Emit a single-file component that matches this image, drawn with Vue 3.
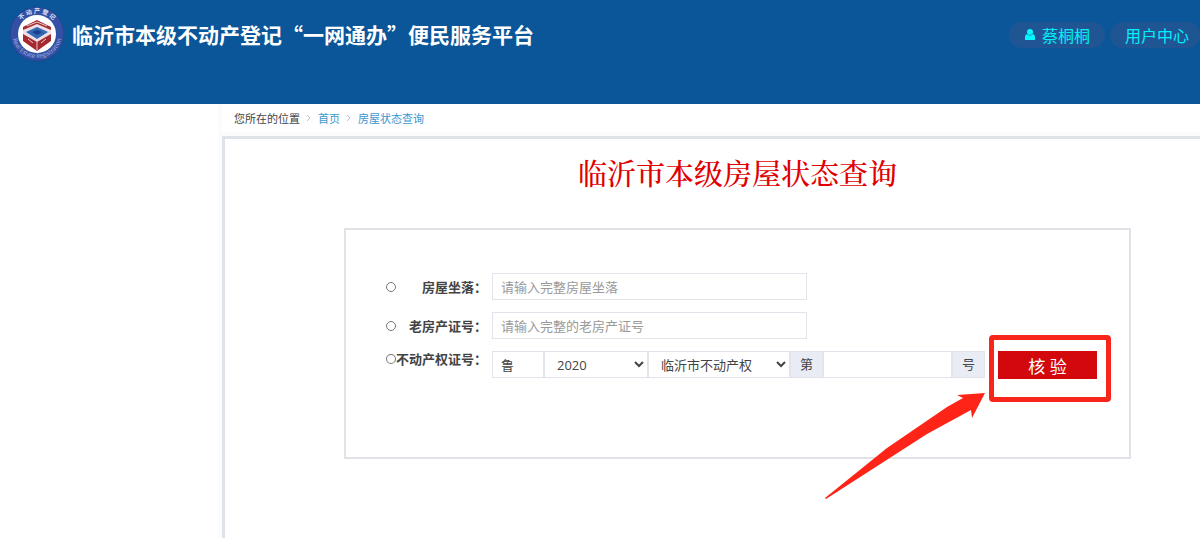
<template>
  <div class="page">
    <header class="header">
      <div class="brand">
        <svg class="logo" viewBox="0 0 56 56" role="img" aria-label="不动产登记">
          <defs>
            <path id="logo-top" d="M7 28a21 21 0 0 1 42 0" />
            <path id="logo-bottom" d="M3 27a25 25 0 0 0 50 0" />
          </defs>
          <circle cx="28" cy="28" r="27" fill="#3450a4" stroke="#1d478d" />
          <circle cx="28" cy="28" r="19" fill="#fff" />
          <text class="logo-cn"><textPath href="#logo-top" startOffset="50%" text-anchor="middle">不 动 产 登 记</textPath></text>
          <text class="logo-en"><textPath href="#logo-bottom" startOffset="50%" text-anchor="middle">Real Estate Registration</textPath></text>
          <path d="M28 14l14 7v14l-14 10-14-10V21z" fill="#a52a2f" />
          <path d="M14 24l14-6 14 6v4l-14 8-14-8z" fill="#eedfe6" />
          <path d="M17 26l11-5 11 5-11 7z" fill="#3267b1" />
          <path d="M23 26l5-2 5 2-5 3z" fill="#1c3f90" />
          <path d="M18 20l10-4 10 4M28 36v8M19 33l5 4M37 33l-5 4" fill="none" stroke="#e8c8cc" />
        </svg>
        <h1 class="site-title">临沂市本级不动产登记“一网通办”便民服务平台</h1>
      </div>
      <nav class="user-nav">
        <a href="#" class="pill">
          <svg class="user-icon" viewBox="0 0 12 12" aria-hidden="true">
            <circle cx="6" cy="3" r="3" />
            <path d="M3 5q3 3 6 0c2 1 2 2 2 4v2H1V9c0-2 0-3 2-4z" />
          </svg>
          蔡桐桐
        </a>
        <a href="#" class="pill">用户中心</a>
      </nav>
    </header>

    <main class="main">
      <nav class="breadcrumb">
        <span>您所在的位置</span>
        <svg class="sep" viewBox="0 0 4 8" aria-hidden="true"><path d="M0 1l3 3-3 3" /></svg>
        <a href="#">首页</a>
        <svg class="sep" viewBox="0 0 4 8" aria-hidden="true"><path d="M0 1l3 3-3 3" /></svg>
        <a href="#">房屋状态查询</a>
      </nav>

      <section class="panel">
        <h2 class="panel-title">临沂市本级房屋状态查询</h2>

        <form class="query-form" @submit.prevent>
          <div v-for="item in textRows" :key="item.key" class="row">
            <label class="row-label">
              <input v-model="queryType" type="radio" name="queryType" :value="item.key" />
              <span>{{ item.label }}：</span>
            </label>
            <input
              v-model="form[item.key]"
              type="text"
              class="field field-long"
              :aria-label="item.label"
              :placeholder="item.placeholder"
            />
          </div>

          <div class="row row-cert">
            <label class="row-label">
              <input v-model="queryType" type="radio" name="queryType" value="certificate" />
              <span>不动产权证号：</span>
            </label>
            <div class="cert-group">
              <input v-model="form.province" type="text" class="field field-province" aria-label="省份简称" />
              <select v-model="form.year" class="field field-year" aria-label="年份">
                <option v-for="year in years" :key="year" :value="year">{{ year }}</option>
              </select>
              <select v-model="form.region" class="field field-region" aria-label="不动产权">
                <option value="临沂市不动产权">临沂市不动产权</option>
              </select>
              <label class="addon" for="cert-number">第</label>
              <input id="cert-number" v-model="form.number" type="text" class="field field-number" />
              <span class="addon">号</span>
            </div>
            <div class="submit-wrap">
              <button type="submit" class="submit-btn">核 验</button>
              <span class="mark-box"></span>
              <svg class="mark-arrow" viewBox="0 0 160 106" aria-hidden="true">
                <path d="M0 105L62 55 122 14 138 5 132 2 160 0 147 25 146 17 102 41 1 106z" />
              </svg>
            </div>
          </div>
        </form>
      </section>
    </main>
  </div>
</template>

<script setup>
import { reactive, ref } from 'vue';

const queryType = ref('');
const years = ['2020', '2019', '2018', '2017', '2016'];

const textRows = [
  { key: 'address', label: '房屋坐落', placeholder: '请输入完整房屋坐落' },
  { key: 'oldNumber', label: '老房产证号', placeholder: '请输入完整的老房产证号' }
];

const form = reactive({
  address: '',
  oldNumber: '',
  province: '鲁',
  year: '2020',
  region: '临沂市不动产权',
  number: ''
});
</script>

<style>
body {
  margin: 0;
  background: #fff;
}
</style>

<style scoped>
.page {
  display: flex;
  flex-direction: column;
  min-height: 100vh;
  overflow-x: hidden;
  font-family: "Open Sans", "Noto Sans CJK SC", sans-serif;
  font-size: 13px;
  color: #444;
}

.page * {
  box-sizing: border-box;
}

a {
  text-decoration: none;
}

/* 顶部 */
.header {
  display: flex;
  justify-content: space-between;
  align-items: flex-start;
  height: 104px;
  padding: 6px 0 0 9px;
  background: #0b5699;
}

.brand {
  display: flex;
  align-items: center;
  gap: 7px;
}

.logo {
  width: 56px;
  height: 56px;
}

.logo-cn {
  font-size: 6px;
  font-weight: 700;
  fill: #dfe6f6;
}

.logo-en {
  font-size: 6px;
  fill: #a9b7e0;
}

.site-title {
  margin: 0;
  font-family: "Noto Sans CJK SC", sans-serif;
  font-size: 21px;
  line-height: 32px;
  font-weight: 700;
  color: #fff;
}

.user-nav {
  display: flex;
  gap: 5px;
  padding-top: 16px;
}

.pill {
  display: flex;
  align-items: center;
  gap: 6px;
  height: 26px;
  padding: 0 15px;
  border-radius: 13px;
  background: #205593;
  color: #00f0fa;
  font-size: 16px;
  white-space: nowrap;
}

.pill:last-child {
  padding-right: 11px;
}

.user-icon {
  width: 12px;
  height: 12px;
  fill: #00f8ff;
}

.main {
  flex: 1;
  display: flex;
  flex-direction: column;
  margin-left: 218px;
  padding-left: 4px;
  background: #fafbfc;
}

.breadcrumb {
  display: flex;
  align-items: center;
  gap: 7px;
  height: 28px;
  margin-bottom: 4px;
  padding-left: 12px;
  background: #fff;
  font-size: 11px;
}

.breadcrumb a {
  color: #3a97d0;
}

.sep {
  width: 4px;
  height: 8px;
  fill: none;
  stroke: #c0c4cc;
}

.panel {
  flex: 1;
  padding: 14px 69px 40px 119px;
  border-top: 3px solid #dfe3e9;
  border-left: 3px solid #dfe3e9;
  background: #fff;
}

.panel-title {
  margin: 0 0 35px;
  font-family: "Noto Serif CJK SC", "Noto Sans CJK SC", serif;
  font-size: 29px;
  line-height: 40px;
  font-weight: 500;
  text-align: center;
  color: #e00000;
}

/* 查询表单 */
.query-form {
  display: flex;
  flex-direction: column;
  gap: 12px;
  min-height: 231px;
  padding: 43px 32px 43px 40px;
  border: 2px solid #dfe3e7;
}

.row {
  display: flex;
  align-items: center;
}

.row-cert {
  align-items: flex-start;
}

.row-label {
  display: flex;
  align-items: center;
  justify-content: space-between;
  width: 106px;
  font-weight: 700;
  line-height: 16px;
  white-space: nowrap;
}

.row-label span {
  padding-right: 5px;
}

.row-label input {
  appearance: none;
  width: 10px;
  height: 10px;
  margin: 0;
  border: 1px solid #777;
  border-radius: 50%;
  background: #fff;
}

.row-label input:checked {
  border: 3px solid #1e88d6;
}

.field {
  height: 27px;
  margin: 0;
  padding: 0 8px;
  border: 1px solid #e2e4ec;
  border-radius: 0;
  background: #fff;
  font-family: inherit;
  font-size: 13px;
  color: #444;
  outline: none;
}

.field:focus {
  border-color: #90b8e0;
}

.field::placeholder {
  color: #9a9a9a;
}

.field-long {
  width: 315px;
}

.cert-group {
  flex: 1;
  display: flex;
  min-width: 0;
  margin-right: 13px;
}

.field-province {
  width: 52px;
}

.field-year {
  width: 104px;
}

.field-region {
  width: 142px;
}

.field-number {
  flex: 1;
  min-width: 0;
}

.addon {
  width: 33px;
  height: 27px;
  border: 1px solid #e2e4ec;
  background: #e9ebf5;
  line-height: 25px;
  text-align: center;
}

.submit-wrap {
  position: relative;
}

.submit-btn {
  display: block;
  width: 99px;
  height: 28px;
  padding: 0;
  border: none;
  background: #d3080c;
  color: #fff;
  font-family: inherit;
  font-size: 17px;
  cursor: pointer;
}

/* 按钮上的红色标注 */
.mark-box {
  position: absolute;
  top: -16px;
  left: -9px;
  width: 122px;
  height: 67px;
  border: 5px solid #f8251b;
  border-radius: 4px;
  pointer-events: none;
}

.mark-arrow {
  position: absolute;
  top: 42px;
  right: 112px;
  width: 160px;
  height: 106px;
  fill: #ff2418;
  pointer-events: none;
}
</style>
